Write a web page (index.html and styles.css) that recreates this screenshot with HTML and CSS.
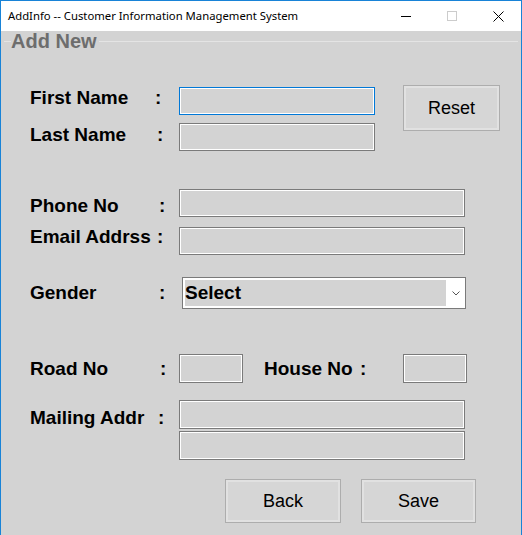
FILE: index.html
```html
<!DOCTYPE html>
<html>
<head>
<meta charset="utf-8">
<title>AddInfo</title>
<link rel="stylesheet" href="styles.css">
</head>
<body>
<div class="window">
  <div class="titlebar">
    <span class="title">AddInfo -- Customer Information Management System</span>
    <div class="caption">
      <span class="cbtn"><svg width="10" height="10" viewBox="0 0 10 10"><path d="M0 5.5H10" stroke="#000" stroke-width="1"/></svg></span>
      <span class="cbtn"><svg width="10" height="10" viewBox="0 0 10 10"><rect x="0.5" y="0.5" width="9" height="9" fill="none" stroke="#cccccc" stroke-width="1"/></svg></span>
      <span class="cbtn"><svg width="11" height="11" viewBox="0 0 11 11"><path d="M0.5 0.5L10.5 10.5M10.5 0.5L0.5 10.5" stroke="#000" stroke-width="1"/></svg></span>
    </div>
  </div>
  <div class="client">
    <div class="group-head">
      <span class="gline short"></span>
      <span class="gtitle">Add New</span>
      <span class="gline"></span>
    </div>

    <div class="block-a">
      <div class="col">
        <div class="row">
          <div class="lbl m0"><span class="name n125">First Name</span><span class="colon">:</span></div>
          <input class="tb focus w196" type="text">
        </div>
        <div class="row r2">
          <div class="lbl m1"><span class="name n127">Last Name</span><span class="colon">:</span></div>
          <input class="tb w196" type="text">
        </div>
      </div>
      <button class="btn reset">Reset</button>
    </div>

    <div class="row r3">
      <div class="lbl m6"><span class="name n129">Phone No</span><span class="colon">:</span></div>
      <input class="tb w286" type="text">
    </div>
    <div class="row r4">
      <div class="lbl m-1"><span class="name n127">Email Addrss</span><span class="colon">:</span></div>
      <input class="tb w286" type="text">
    </div>
    <div class="row r5">
      <div class="lbl m5"><span class="name n129">Gender</span><span class="colon">:</span></div>
      <div class="select">
        <span class="sel-val">Select</span>
        <span class="sel-arrow"><svg width="8" height="5" viewBox="0 0 8 5"><path d="M0.5 0.5L4 4L7.5 0.5" fill="none" stroke="#555" stroke-width="1"/></svg></span>
      </div>
    </div>
    <div class="row r6">
      <div class="lbl m4"><span class="name n130">Road No</span><span class="colon">:</span></div>
      <input class="tb w64 h29" type="text">
      <div class="lbl house m4"><span class="name n98">House No</span><span class="colon">:</span></div>
      <input class="tb w64 h29" type="text">
    </div>
    <div class="row r7">
      <div class="lbl m7"><span class="name n128">Mailing Addr</span><span class="colon">:</span></div>
      <input class="tb w286 h29" type="text">
    </div>
    <div class="row r8">
      <input class="tb w286 h29 indent" type="text">
    </div>

    <div class="actions">
      <button class="btn back">Back</button>
      <button class="btn save">Save</button>
    </div>
  </div>
</div>
</body>
</html>
```

FILE: styles.css
```css
html, body {
  margin: 0;
  padding: 0;
}
body {
  width: 522px;
  height: 535px;
  overflow: hidden;
  background: #d3d3d3;
}
.window {
  box-sizing: border-box;
  width: 522px;
  height: 535px;
  border: 1px solid #1883d7;
  border-bottom: none;
  background: #d3d3d3;
  display: flex;
  flex-direction: column;
}
.titlebar {
  height: 30px;
  background: #fff;
  display: flex;
  align-items: center;
  flex: none;
}
.title {
  font-family: "Noto Sans", "Open Sans", sans-serif;
  font-size: 11.3px;
  color: #000;
  padding-left: 7px;
  line-height: 30px;
  flex: 1;
  white-space: nowrap;
}
.caption {
  display: flex;
  height: 30px;
}
.cbtn {
  width: 46px;
  height: 30px;
  display: flex;
  align-items: center;
  justify-content: center;
}
.client {
  flex: 1;
  display: flex;
  flex-direction: column;
  font-family: "Liberation Sans", Arial, sans-serif;
  padding-left: 29px;
}
.group-head {
  height: 20px;
  display: flex;
  align-items: center;
  margin-left: -26px;
  margin-right: 3px;
}
.gline {
  flex: 1;
  height: 1px;
  background: #e4e4e4;
}
.gline.short {
  flex: none;
  width: 7px;
}
.gtitle {
  font-weight: bold;
  font-size: 20px;
  line-height: 20px;
  color: #6d6d6d;
  padding: 0 2px 0 0;
}
.row {
  display: flex;
  align-items: flex-start;
}
.lbl {
  display: flex;
  width: 149px;
  font-weight: bold;
  font-size: 19px;
  line-height: 22px;
  color: #000;
  white-space: nowrap;
  flex: none;
}
.name { display: inline-block; }
.n98 { width: 96px; }
.n125 { width: 125px; }
.n127 { width: 127px; }
.n128 { width: 128px; }
.n129 { width: 129px; }
.n130 { width: 130px; }
.m-1 { margin-top: -1px; }
.m0 { margin-top: 0; }
.m1 { margin-top: 1px; }
.m4 { margin-top: 4px; }
.m5 { margin-top: 5px; }
.m6 { margin-top: 6px; }
.m7 { margin-top: 7px; }

.tb {
  box-sizing: border-box;
  height: 28px;
  margin: 0;
  padding: 0;
  border: 1px solid #7a7a7a;
  box-shadow: inset 0 0 0 1px #ffffff;
  background: #d3d3d3;
  outline: none;
  flex: none;
  font-size: 16px;
}
.tb.focus { border-color: #0078d7; }
.w196 { width: 196px; }
.w286 { width: 286px; }
.w64 { width: 64px; }
.h29 { height: 29px; }
.indent { margin-left: 149px; }

.block-a {
  display: flex;
  align-items: flex-start;
  margin-top: 34px;
}
.col {
  display: flex;
  flex-direction: column;
  padding-top: 2px;
}
.r2 { margin-top: 8px; }
.r3 { margin-top: 38px; }
.r4 { margin-top: 10px; }
.r5 { margin-top: 22px; }
.r6 { margin-top: 45px; }
.r7 { margin-top: 17px; }
.r8 { margin-top: 2px; }

.house {
  width: 139px;
  margin-left: 21px;
}

.select {
  box-sizing: border-box;
  margin-left: 3px;
  width: 284px;
  height: 32px;
  border: 1px solid #7a7a7a;
  background: #fff;
  padding: 2px;
  display: flex;
  flex: none;
}
.sel-val {
  width: 261px;
  background: #d3d3d3;
  font-weight: bold;
  font-size: 19px;
  line-height: 26px;
  color: #000;
}
.sel-arrow {
  flex: 1;
  display: flex;
  align-items: center;
  justify-content: center;
  padding-left: 2px;
}

.btn {
  box-sizing: border-box;
  margin: 0;
  padding: 0;
  border: 1px solid #adadad;
  box-shadow: inset 0 0 0 2px #e1e1e1;
  background: #d6d6d6;
  font-family: "Liberation Sans", Arial, sans-serif;
  font-size: 18px;
  color: #000;
  flex: none;
}
.reset {
  width: 97px;
  height: 46px;
  margin-left: 28px;
  margin-top: 0;
}
.actions {
  display: flex;
  margin-top: 19px;
  padding-left: 195px;
  gap: 20px;
}
.back { width: 116px; height: 44px; }
.save { width: 115px; height: 44px; }
```
